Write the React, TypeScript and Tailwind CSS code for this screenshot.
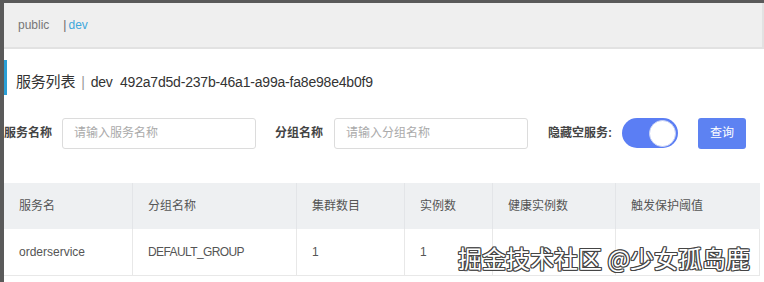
import React from "react";

const cols = [
  { label: "服务名", w: "w-[128px]" },
  { label: "分组名称", w: "w-[164px]" },
  { label: "集群数目", w: "w-[108px]" },
  { label: "实例数", w: "w-[88px]" },
  { label: "健康实例数", w: "w-[123px]" },
  { label: "触发保护阈值", w: "flex-1" },
];

const row = ["orderservice", "DEFAULT_GROUP", "1", "1", "", ""];

export default function App() {
  return (
    <div
      className="relative w-[764px] h-[282px] overflow-hidden bg-white border-t-[3px] border-l-[4px] border-[#5a5a5a]"
      style={{ fontFamily: '"Liberation Sans", "Noto Sans CJK SC", sans-serif' }}
    >
      {/* 顶部命名空间 */}
      <div className="h-[46px] bg-[#efefef] border-b-2 border-r-2 border-[#e2e2e2] flex items-center pl-[14px] text-[12px]">
        <span className="text-[#777]">public</span>
        <span className="ml-[14px] text-[#666]">|</span>
        <span className="ml-[2px] text-[#3fa8dc]">dev</span>
      </div>

      {/* 标题 */}
      <div className="flex items-start mt-[11px] h-[35px]">
        <div className="w-[3px] h-[35px] bg-[#2a9fd6]" />
        <div className="ml-[9px] pt-[12px] text-[14px] leading-[20px] text-[#333] tracking-[-0.2px]">
          <span className="text-[15px]">服务列表</span>
          <span className="text-[#999] mx-[6px]">|</span>dev&nbsp; 492a7d5d-237b-46a1-a99a-fa8e98e4b0f9
        </div>
      </div>

      {/* 搜索栏 */}
      <div className="flex items-center mt-[22px] h-[32px] text-[12px]">
        <span className="font-bold text-[#444]">服务名称</span>
        <div className="ml-[10px] w-[194px] h-[31px] border border-[#dcdcdc] rounded-[3px] flex items-center pl-[11px] text-[#aaa]">
          请输入服务名称
        </div>
        <span className="ml-[19px] font-bold text-[#444]">分组名称</span>
        <div className="ml-[11px] w-[194px] h-[31px] border border-[#dcdcdc] rounded-[3px] flex items-center pl-[11px] text-[#aaa]">
          请输入分组名称
        </div>
        <span className="ml-[20px] font-bold text-[#444]">隐藏空服务:</span>
        <div className="ml-[10px] w-[56px] h-[30px] rounded-full bg-[#5b7ef4] flex items-center justify-end pr-[2px]">
          <div className="w-[27px] h-[27px] rounded-full bg-white border border-[#c9d3f5]" />
        </div>
        <div className="ml-[20px] w-[48px] h-[31px] rounded-[3px] bg-[#5d82f2] text-white flex items-center justify-center">
          查询
        </div>
      </div>

      {/* 表格 */}
      <div className="mt-[34px] w-[756px] text-[12px] text-[#555]">
        <div className="flex h-[46px] bg-[#eef0f2]">
          {cols.map((c, i) => (
            <div
              key={i}
              className={`${c.w} flex items-center pl-[15px] ${i > 0 ? "border-l border-[#e3e5e8]" : ""}`}
            >
              {c.label}
            </div>
          ))}
        </div>
        <div className="flex h-[47px] bg-white border-b border-r border-[#e8e8e8]">
          {row.map((v, i) => (
            <div
              key={i}
              className={`${cols[i].w} flex items-center pl-[15px] ${i > 0 ? "border-l border-[#e8e8e8]" : ""} ${i === 1 ? "tracking-[-0.6px]" : ""}`}
            >
              {v}
            </div>
          ))}
        </div>
      </div>

      {/* 水印 */}
      <div
        className="absolute left-[454px] top-[240px] text-[24px] leading-[30px] whitespace-nowrap text-white"
        style={{
          fontFamily: '"Noto Sans CJK SC", sans-serif',
          textShadow:
            "1px 0 #444, -1px 0 #444, 0 1px #444, 0 -1px #444, 1px 1px #444, -1px -1px #444, 1px -1px #444, -1px 1px #444",
        }}
      >
        掘金技术社区 @少女孤岛鹿
      </div>
    </div>
  );
}
